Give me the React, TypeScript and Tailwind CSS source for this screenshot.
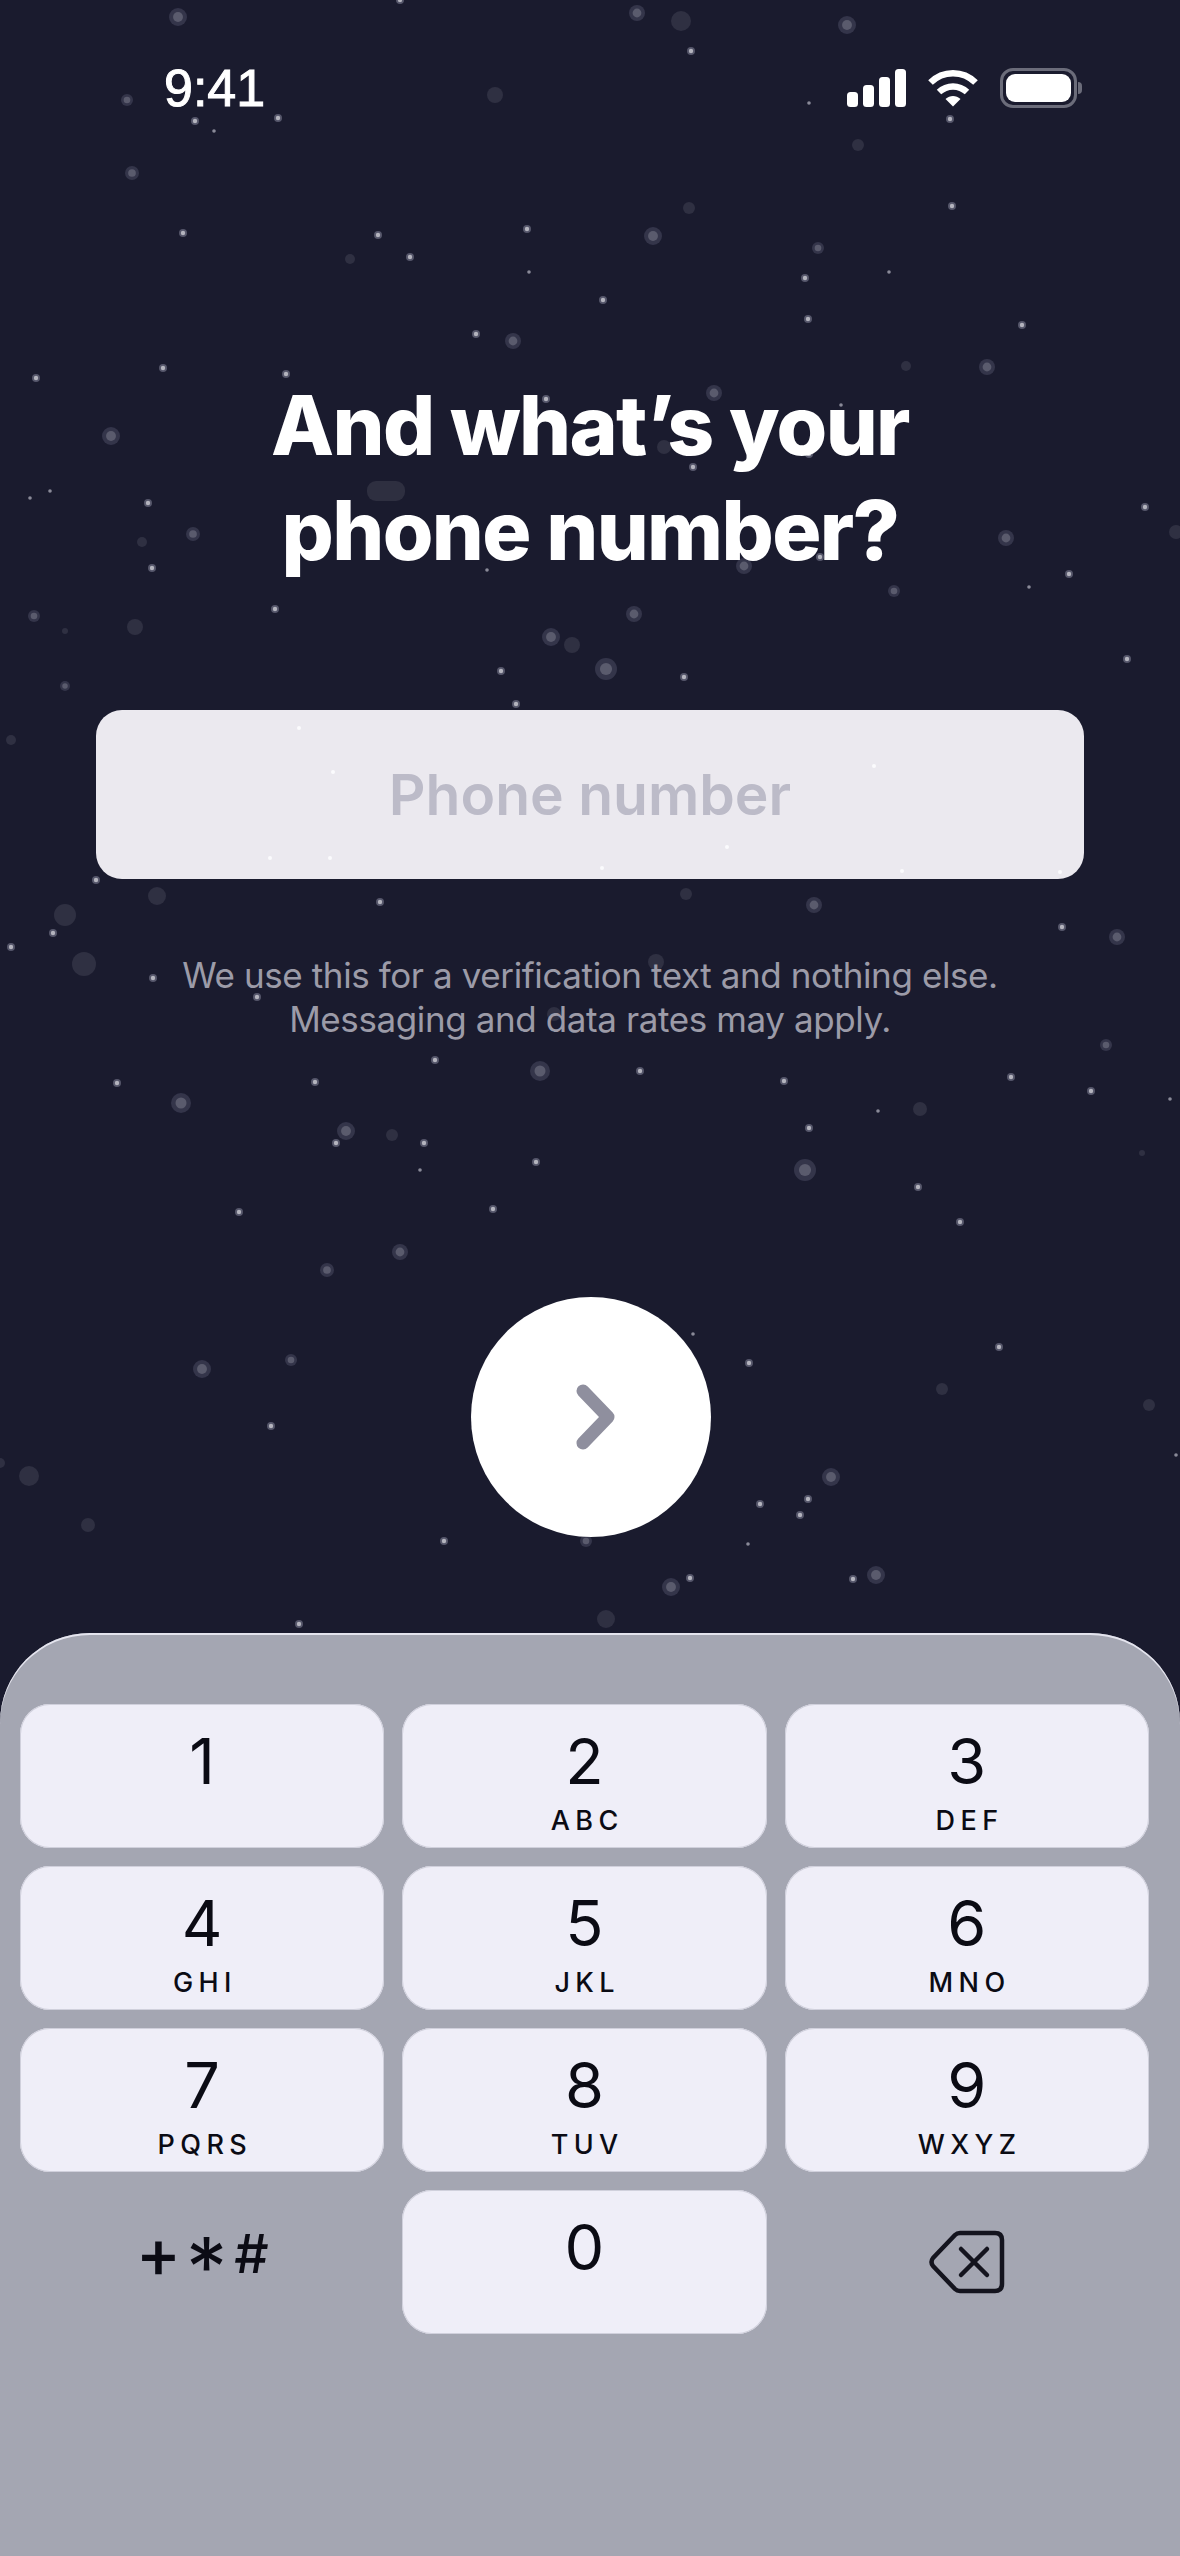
const sans = "font-['Inter','Liberation_Sans',sans-serif]";

// Star field coordinates on the 1180x2556 canvas.
const smallStars: [number, number][] = [
  [691,51],[400,0],[195,121],[278,118],[950,119],[952,206],[183,233],[378,235],[527,229],[410,257],[805,278],[603,300],[808,319],[1022,325],[476,334],[36,378],[163,368],[286,374],[546,399],[693,467],[809,454],[148,503],[1145,507],[152,568],[820,557],[1069,574],[275,609],
  [684,677],[1127,659],[501,671],[516,704],[96,880],[380,902],[53,933],[1062,927],[11,947],[153,978],[257,997],[435,1060],[640,1071],[117,1083],[315,1082],[784,1081],[1011,1077],[1091,1091],[809,1128],[336,1143],[424,1143],[536,1162],[918,1187],[239,1212],[493,1209],
  [960,1222],[749,1363],[999,1347],[271,1426],[760,1504],[808,1499],[800,1515],[444,1541],[690,1578],[853,1579],[299,1624],
];
const tinyStars: [number, number][] = [
  [214,131],[809,103],[529,272],[889,272],[841,405],[30,498],[50,491],[487,570],[1029,587],[878,1111],[1170,1099],[420,1170],[693,1334],[1176,1455],[748,1544],
];
const ringStars: [number, number, number][] = [
  [178,17,9],[637,13,8],[847,25,9],[127,100,6],[132,173,7],[653,236,9],[818,248,6],[513,341,8],[987,367,8],[714,393,8],[111,436,9],[193,534,7],[1006,538,8],[744,566,8],[894,591,6],[634,614,8],[34,616,6],
  [551,637,9],[606,669,11],[65,686,5],[814,905,8],[1117,937,8],[1106,1045,6],[540,1071,10],[181,1103,10],[346,1131,9],[805,1170,11],
  [400,1252,8],[327,1270,7],[202,1369,9],[291,1360,6],[831,1477,9],[586,1541,6],[671,1587,9],[876,1575,9],
];
const dimStars: [number, number, number][] = [
  [681,21,10],[495,95,8],[858,145,6],[689,208,6],[350,259,5],[906,366,5],[664,447,7],[142,542,5],[1176,532,7],[135,627,8],[572,645,8],[65,631,3],[11,740,5],[157,896,9],[686,894,6],[65,915,11],[84,964,12],[656,962,8],[554,1014,7],[920,1109,7],[392,1135,6],[1142,1153,3],[942,1389,6],[1149,1405,6],[0,1463,5],[29,1476,10],[88,1525,7],[606,1619,9],
];
const fieldSpecks: [number, number][] = [
  [203,18],[778,56],[237,62],[631,137],[174,148],[234,148],[506,158],[806,161],[964,162],
];
const keys: [string, string][] = [
  ["1",""],["2","ABC"],["3","DEF"],["4","GHI"],["5","JKL"],["6","MNO"],["7","PQRS"],["8","TUV"],["9","WXYZ"],
];

function Starfield() {
  return (
    <svg className="absolute left-0 top-0" width="1180" height="1640" viewBox="0 0 1180 1640">
      {dimStars.map(([x, y, r]) => <circle key={`d${x}-${y}`} cx={x} cy={y} r={r} fill="#2f3042" />)}
      <rect x="367" y="481" width="38" height="20" rx="9" fill="#2e2f40" />
      {ringStars.map(([x, y, r]) => (
        <g key={`r${x}-${y}`}>
          <circle cx={x} cy={y} r={r} fill="#34354a" />
          <circle cx={x} cy={y} r={r * 0.55} fill="#5a5b6d" />
        </g>
      ))}
      {smallStars.map(([x, y]) => (
        <g key={`s${x}-${y}`}>
          <circle cx={x} cy={y} r="4" fill="#55566a" />
          <circle cx={x} cy={y} r="2.2" fill="#b4b4be" />
        </g>
      ))}
      {tinyStars.map(([x, y]) => <circle key={`t${x}-${y}`} cx={x} cy={y} r="1.8" fill="#8a8a98" />)}
    </svg>
  );
}

function StatusIcons() {
  return (
    <div className="flex items-center">
      <svg width="60" height="38" viewBox="0 0 60 38" fill="#ffffff">
        <rect x="0" y="23" width="11" height="15" rx="3.5" />
        <rect x="16" y="16" width="11" height="22" rx="3.5" />
        <rect x="32" y="8" width="11" height="30" rx="3.5" />
        <rect x="48" y="0" width="11" height="38" rx="3.5" />
      </svg>
      <svg className="ml-[21px]" width="50" height="38" viewBox="0 0 50 38" fill="none" stroke="#ffffff" strokeWidth="6.5">
        <path d="M2.5 13.5 C15 1 35 1 47.5 13.5" />
        <path d="M11 23 C19 15.5 31 15.5 39 23" />
        <path d="M17.5 30 L25 37.5 L32.5 30 C28 26 22 26 17.5 30 Z" fill="#ffffff" stroke="none" />
      </svg>
      <div className="ml-[22px] flex items-center">
        <div className="flex h-[40px] w-[77px] items-center justify-center rounded-[13px] border-[3px] border-[#6b6c7a]">
          <div className="h-[28px] w-[65px] rounded-[9px] bg-white" />
        </div>
        <div className="ml-px h-[12px] w-[4px] rounded-r-[4px] bg-[#6b6c7a]" />
      </div>
    </div>
  );
}

function PadKey({ digit, letters }: { digit: string; letters: string }) {
  return (
    <div className="flex h-[144px] flex-col items-center rounded-[30px] bg-[#efeef8] pt-[21px] text-[#0b0b14] shadow-[inset_0_0_0_1px_#d0d0dc]">
      <div className={`${sans} h-[72px] text-[63px] font-normal leading-[72px]`}>{digit}</div>
      {letters && (
        <div className={`${sans} mt-[8px] pl-[0.2em] text-[27px] font-medium leading-[32px] tracking-[0.2em]`}>{letters}</div>
      )}
    </div>
  );
}

export default function App() {
  return (
    <div className="relative flex h-[2556px] w-[1180px] flex-col overflow-hidden bg-[#1a1b2e]">
      <Starfield />

      <div className="relative flex items-center justify-between pl-[164px] pr-[98px] pt-[58px]">
        <span className="font-['Liberation_Sans',sans-serif] text-[52px] leading-[60px] text-white [-webkit-text-stroke:1px_white]">9:41</span>
        <StatusIcons />
      </div>

      <h1 className={`${sans} relative mt-[255px] text-center text-[82px] font-extrabold leading-[105px] tracking-[-0.02em] text-white`}>
        And what’s your<br />phone number?
      </h1>

      <div className="relative mx-[96px] mt-[127px] flex h-[169px] items-center justify-center overflow-hidden rounded-[26px] bg-[#ebe9ef]">
        <svg className="absolute left-0 top-0" width="988" height="169" viewBox="0 0 988 169">
          {fieldSpecks.map(([x, y]) => <circle key={`${x}-${y}`} cx={x} cy={y} r="2" fill="#fbfbfd" />)}
        </svg>
        <span className={`${sans} relative text-[57px] font-semibold text-[#bcbbc8]`}>Phone number</span>
      </div>

      <p className={`${sans} relative mt-[74px] text-center text-[35px] font-normal leading-[44px] tracking-[-0.4px] text-[#9c9ba8]`}>
        We use this for a verification text and nothing else.<br />Messaging and data rates may apply.
      </p>

      <div className="relative ml-[1px] mt-[256px] flex justify-center">
        <div className="flex h-[240px] w-[240px] items-center justify-center rounded-full bg-white">
          <svg className="ml-[10px] mb-[1px]" width="40" height="66" viewBox="0 0 40 66" fill="none" stroke="#8f8f9e" strokeWidth="13" strokeLinecap="round" strokeLinejoin="round">
            <path d="M7 7 L32 33 L7 59" />
          </svg>
        </div>
      </div>

      <div className="relative mt-auto h-[923px] rounded-t-[90px] bg-[#a4a6b2] pl-[20px] pr-[31px] pt-[71px] shadow-[inset_0_2px_0_#e4e4ee]">
        <div className="grid grid-cols-3 gap-[18px]">
          {keys.map(([d, l]) => <PadKey key={d} digit={d} letters={l} />)}

          <div className={`${sans} flex h-[144px] items-start justify-center pt-[26px] font-medium leading-[72px] text-[#0b0b14]`}>
            <span className="text-[68px]">+</span>
            <span className="ml-[5px] mt-[16px] text-[82px] font-normal">*</span>
            <span className="ml-[7px] mt-[2px] text-[54px]">#</span>
          </div>
          <PadKey digit="0" letters="" />
          <div className="flex h-[144px] items-start justify-center pt-[40px]">
            <svg width="76" height="64" viewBox="0 0 76 64" fill="none" stroke="#14141e" strokeWidth="4.5" strokeLinecap="round" strokeLinejoin="round">
              <path d="M31 3 H66 Q73 3 73 10 V54 Q73 61 66 61 H31 Q28 61 26 59 L4 36 Q1 32 4 28 L26 5 Q28 3 31 3 Z" />
              <path d="M32 19 L58 45 M58 19 L32 45" />
            </svg>
          </div>
        </div>
      </div>
    </div>
  );
}
